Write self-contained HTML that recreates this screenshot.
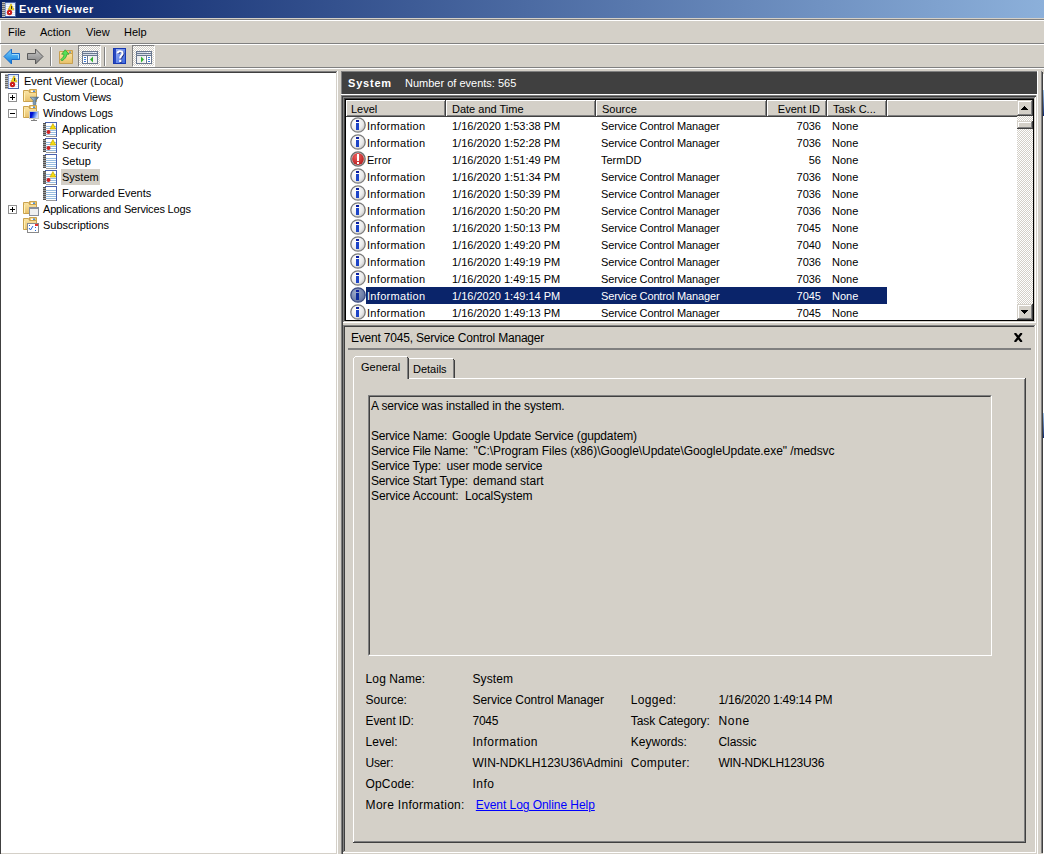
<!DOCTYPE html>
<html><head><meta charset="utf-8">
<style>
*{margin:0;padding:0;box-sizing:border-box}
html,body{width:1044px;height:854px;overflow:hidden;background:#d4d0c8}
body{position:relative;font-family:"Liberation Sans",sans-serif;font-size:11px;color:#000}
.a{position:absolute}
.t{position:absolute;white-space:pre;line-height:13px;height:13px}
svg{overflow:visible}
</style></head><body>
<svg width="0" height="0" style="position:absolute"><defs>
<radialGradient id="gi" cx="0.35" cy="0.35" r="0.8"><stop offset="0" stop-color="#ffffff"/><stop offset="0.6" stop-color="#eaeaea"/><stop offset="1" stop-color="#b8b8b8"/></radialGradient>
<radialGradient id="gis" cx="0.35" cy="0.35" r="0.8"><stop offset="0" stop-color="#9aa8c8"/><stop offset="1" stop-color="#5a6a98"/></radialGradient>
<radialGradient id="ge" cx="0.4" cy="0.3" r="0.8"><stop offset="0" stop-color="#f06060"/><stop offset="1" stop-color="#b01818"/></radialGradient>
<linearGradient id="gf" x1="0" y1="0" x2="0" y2="1"><stop offset="0" stop-color="#fbe6a8"/><stop offset="1" stop-color="#e8c068"/></linearGradient>
<linearGradient id="gb" x1="0" y1="0" x2="0" y2="1"><stop offset="0" stop-color="#7ad0ff"/><stop offset="1" stop-color="#0a78d8"/></linearGradient>
<linearGradient id="gg" x1="0" y1="0" x2="0" y2="1"><stop offset="0" stop-color="#c8c8c8"/><stop offset="1" stop-color="#808080"/></linearGradient>
<pattern id="dith" width="2" height="2" patternUnits="userSpaceOnUse"><rect width="2" height="2" fill="#d4d0c8"/><rect width="1" height="1" fill="#fff"/><rect x="1" y="1" width="1" height="1" fill="#fff"/></pattern>
</defs></svg>
<div class="a" style="left:0px;top:0px;width:1044px;height:18px;background:linear-gradient(to right,#0a246a,#8cb0da);"></div>
<svg class="a" style="left:2px;top:2px" width="14" height="15" viewBox="0 0 14 15" shape-rendering="crispEdges"><rect x="2" y="0" width="12" height="15" fill="#4a64a8"/><rect x="3" y="1" width="10" height="13" fill="#8aa4d8"/><rect x="4" y="1" width="9" height="13" fill="#dce8f8"/><rect x="4" y="3" width="9" height="1" fill="#fff"/><rect x="4" y="5" width="9" height="1" fill="#fff"/><rect x="4" y="7" width="9" height="1" fill="#fff"/><rect x="4" y="9" width="9" height="1" fill="#fff"/><rect x="4" y="11" width="9" height="1" fill="#fff"/><rect x="4" y="13" width="9" height="1" fill="#fff"/><rect x="0" y="0" width="3" height="15" fill="#b8b8b8"/><rect x="0" y="1" width="3" height="1" fill="#686868"/><rect x="0" y="3" width="3" height="1" fill="#686868"/><rect x="0" y="5" width="3" height="1" fill="#686868"/><rect x="0" y="7" width="3" height="1" fill="#686868"/><rect x="0" y="9" width="3" height="1" fill="#686868"/><rect x="0" y="11" width="3" height="1" fill="#686868"/><rect x="0" y="13" width="3" height="1" fill="#686868"/><path d="M6 7.8 L12 7.8 L9 1.8 Z" fill="#f4d818" stroke="#c8a000" stroke-width="0.6" shape-rendering="geometricPrecision"/><rect x="8.5" y="3.8" width="1" height="2" fill="#333"/><rect x="8.5" y="6.3" width="1" height="1" fill="#333"/><circle cx="7.5" cy="10.5" r="2.7" fill="#cc2020" shape-rendering="geometricPrecision"/><rect x="7" y="10" width="1" height="1" fill="#fff"/></svg>
<div class="t" style="left:19px;top:3px;color:#fff;font-weight:bold;letter-spacing:0.55px">Event Viewer</div>
<div class="a" style="left:0px;top:18px;width:1044px;height:1px;background:#d4d0c8"></div>
<div class="a" style="left:0px;top:19px;width:1044px;height:1px;background:#808080"></div>
<div class="a" style="left:0px;top:20px;width:1044px;height:1px;background:#fff"></div>
<div class="a" style="left:0px;top:21px;width:1px;height:22px;background:#fff"></div>
<div class="a" style="left:0px;top:43px;width:1044px;height:1px;background:#808080"></div>
<div class="a" style="left:0px;top:44px;width:1044px;height:1px;background:#fff"></div>
<div class="a" style="left:0px;top:45px;width:1px;height:22px;background:#fff"></div>
<div class="a" style="left:0px;top:67px;width:1044px;height:1px;background:#808080"></div>
<div class="a" style="left:0px;top:68px;width:1044px;height:1px;background:#fff"></div>
<div class="t" style="left:8px;top:26px;">File</div>
<div class="t" style="left:40px;top:26px;">Action</div>
<div class="t" style="left:86px;top:26px;">View</div>
<div class="t" style="left:124px;top:26px;">Help</div>
<svg class="a" style="left:3px;top:48px" width="18" height="17" viewBox="0 0 18 17"><path d="M1 8.5 L8.5 1 L8.5 5.5 L16.5 5.5 L16.5 11.5 L8.5 11.5 L8.5 16 Z" fill="url(#gb)" stroke="#1a6cc8" stroke-width="1"/><path d="M9 6.5 L15.5 6.5 L15.5 10.5" fill="none" stroke="#b8e8ff" stroke-width="0.8"/></svg>
<svg class="a" style="left:26px;top:48px" width="18" height="17" viewBox="0 0 18 17"><path d="M17 8.5 L9.5 1 L9.5 5.5 L1.5 5.5 L1.5 11.5 L9.5 11.5 L9.5 16 Z" fill="url(#gg)" stroke="#5a5a5a" stroke-width="1"/></svg>
<div class="a" style="left:50px;top:47px;width:1px;height:19px;background:#808080"></div>
<div class="a" style="left:51px;top:47px;width:1px;height:19px;background:#fff"></div>
<svg class="a" style="left:59px;top:50px" width="15" height="15" viewBox="0 0 15 15"><path d="M7.5 0.5 L13.5 0.5 L13.5 4.5 L7.5 4.5 Z" fill="#f2c868" stroke="#c8a050"/><rect x="10" y="1.5" width="2" height="1.2" fill="#4a90e0"/><path d="M0.5 1.5 L6.5 1.5 L7.5 3.5 L13.5 3.5 L13.5 13.5 L0.5 13.5 Z" fill="url(#gf)" stroke="#c8a050"/><path d="M6.2 -0.2 L10 4.2 L7.9 4.2 C7.6 7 5.8 9.2 3 10.8 L1.6 9.6 C4 8 4.9 6.2 4.9 4.2 L2.6 4.2 Z" fill="#56e056" stroke="#2a9a2a" stroke-width="0.7"/></svg>
<div class="a" style="left:78px;top:45px;width:23px;height:22px;border-top:1px solid #808080;border-left:1px solid #808080;border-right:1px solid #fff;border-bottom:1px solid #fff;background-image:repeating-conic-gradient(#fff 0 25%,#d4d0c8 0 50%);background-size:2px 2px"></div>
<svg class="a" style="left:82px;top:51px" width="16" height="13" viewBox="0 0 16 13" shape-rendering="crispEdges"><rect x="0" y="0" width="16" height="13" fill="#6a7890"/><rect x="1" y="1" width="14" height="1" fill="#d8dee8"/><rect x="1" y="3" width="14" height="1" fill="#d8dee8"/><rect x="11" y="1" width="1" height="1" fill="#fff"/><rect x="13" y="1" width="1" height="1" fill="#fff"/><rect x="1" y="5" width="14" height="7" fill="#fff"/><rect x="5" y="5" width="1" height="7" fill="#6a7890"/><rect x="2" y="6" width="2" height="1" fill="#3a7ad8"/><rect x="2" y="8" width="2" height="1" fill="#3a7ad8"/><rect x="2" y="10" width="2" height="1" fill="#3a7ad8"/><rect x="7" y="5" width="8" height="7" fill="#f0f0f0"/><path d="M8 8.5 L11 5.5 L11 11.5 Z" fill="#30b030" shape-rendering="geometricPrecision"/></svg>
<div class="a" style="left:104px;top:47px;width:1px;height:19px;background:#808080"></div>
<div class="a" style="left:105px;top:47px;width:1px;height:19px;background:#fff"></div>
<svg class="a" style="left:113px;top:48px" width="13" height="16" viewBox="0 0 13 16"><defs><linearGradient id="gh" x1="0" y1="0" x2="1" y2="1"><stop offset="0" stop-color="#9ab0f4"/><stop offset="1" stop-color="#3a68e0"/></linearGradient></defs><rect x="0" y="0" width="13" height="16" fill="#1838b0"/><rect x="3" y="1" width="9" height="14" fill="url(#gh)"/><rect x="1" y="1" width="2" height="14" fill="#2848c0"/><path d="M5.3999999999999995 6.0 C5.3999999999999995 3.2 10.4 3.0 10.4 5.8 C10.4 7.8 8.1 8.2 8.1 10.4 V11.2" fill="none" stroke="#1a2a80" stroke-width="2.1"/><rect x="7.0" y="12.4" width="2.2" height="2.2" fill="#1a2a80"/><path d="M4.6 5.4 C4.6 2.6 9.6 2.4 9.6 5.2 C9.6 7.2 7.3 7.6 7.3 9.8 V10.6" fill="none" stroke="#fff" stroke-width="2.1"/><rect x="6.2" y="11.8" width="2.2" height="2.2" fill="#fff"/></svg>
<div class="a" style="left:132px;top:45px;width:23px;height:22px;border-top:1px solid #808080;border-left:1px solid #808080;border-right:1px solid #fff;border-bottom:1px solid #fff;background-image:repeating-conic-gradient(#fff 0 25%,#d4d0c8 0 50%);background-size:2px 2px"></div>
<svg class="a" style="left:136px;top:51px" width="16" height="13" viewBox="0 0 16 13" shape-rendering="crispEdges"><rect x="0" y="0" width="16" height="13" fill="#6a7890"/><rect x="1" y="1" width="14" height="1" fill="#d8dee8"/><rect x="1" y="3" width="14" height="1" fill="#d8dee8"/><rect x="11" y="1" width="1" height="1" fill="#fff"/><rect x="13" y="1" width="1" height="1" fill="#fff"/><rect x="1" y="5" width="14" height="7" fill="#fff"/><rect x="10" y="5" width="1" height="7" fill="#6a7890"/><rect x="12" y="6" width="2" height="1" fill="#3a7ad8"/><rect x="12" y="8" width="2" height="1" fill="#3a7ad8"/><rect x="12" y="10" width="2" height="1" fill="#3a7ad8"/><rect x="1" y="5" width="8" height="7" fill="#f0f0f0"/><path d="M8 8.5 L5 5.5 L5 11.5 Z" fill="#30b030" shape-rendering="geometricPrecision"/></svg>
<div class="a" style="left:0px;top:71px;width:338px;height:783px;background:#fff;"></div>
<div class="a" style="left:0px;top:71px;width:338px;height:1px;background:#808080"></div>
<div class="a" style="left:0px;top:72px;width:337px;height:1px;background:#404040"></div>
<div class="a" style="left:0px;top:72px;width:1px;height:782px;background:#404040"></div>
<div class="a" style="left:336px;top:72px;width:1px;height:782px;background:#d4d0c8"></div>
<div class="a" style="left:337px;top:71px;width:1px;height:783px;background:#fff"></div>
<div class="a" style="left:1px;top:853px;width:336px;height:1px;background:#d4d0c8"></div>
<svg class="a" style="left:5px;top:74px" width="14" height="15" viewBox="0 0 14 15" shape-rendering="crispEdges"><rect x="2" y="0" width="12" height="15" fill="#4a64a8"/><rect x="3" y="1" width="10" height="13" fill="#8aa4d8"/><rect x="4" y="1" width="9" height="13" fill="#dce8f8"/><rect x="4" y="3" width="9" height="1" fill="#fff"/><rect x="4" y="5" width="9" height="1" fill="#fff"/><rect x="4" y="7" width="9" height="1" fill="#fff"/><rect x="4" y="9" width="9" height="1" fill="#fff"/><rect x="4" y="11" width="9" height="1" fill="#fff"/><rect x="4" y="13" width="9" height="1" fill="#fff"/><rect x="0" y="0" width="3" height="15" fill="#b8b8b8"/><rect x="0" y="1" width="3" height="1" fill="#686868"/><rect x="0" y="3" width="3" height="1" fill="#686868"/><rect x="0" y="5" width="3" height="1" fill="#686868"/><rect x="0" y="7" width="3" height="1" fill="#686868"/><rect x="0" y="9" width="3" height="1" fill="#686868"/><rect x="0" y="11" width="3" height="1" fill="#686868"/><rect x="0" y="13" width="3" height="1" fill="#686868"/><path d="M6 7.8 L12 7.8 L9 1.8 Z" fill="#f4d818" stroke="#c8a000" stroke-width="0.6" shape-rendering="geometricPrecision"/><rect x="8.5" y="3.8" width="1" height="2" fill="#333"/><rect x="8.5" y="6.3" width="1" height="1" fill="#333"/><circle cx="7.5" cy="10.5" r="2.7" fill="#cc2020" shape-rendering="geometricPrecision"/><rect x="7" y="10" width="1" height="1" fill="#fff"/></svg>
<div class="t" style="left:24px;top:75px;letter-spacing:-0.1px">Event Viewer (Local)</div>
<svg class="a" style="left:8px;top:93px" width="9" height="9" viewBox="0 0 9 9" shape-rendering="crispEdges"><rect x="0.5" y="0.5" width="8" height="8" fill="#fff" stroke="#919191"/><rect x="2" y="4" width="5" height="1" fill="#000"/><rect x="4" y="2" width="1" height="5" fill="#000"/></svg>
<svg class="a" style="left:23px;top:89px" width="16" height="16" viewBox="0 0 16 16"><path d="M6.5 0.5 L13.5 0.5 L13.5 4.5 L6.5 4.5 Z" fill="#f2c868" stroke="#caa24e"/><rect x="8" y="1.5" width="2" height="1.5" fill="#fff"/><rect x="10" y="1.5" width="2" height="1.5" fill="#4a90e0"/><path d="M0.5 1.5 L5.5 1.5 L6.5 3.5 L13.5 3.5 L13.5 12.5 L0.5 12.5 Z" fill="url(#gf)" stroke="#caa24e"/><rect x="1" y="4" width="1" height="8" fill="#fff2b8"/><defs><linearGradient id="gfu" x1="0" y1="0" x2="1" y2="0"><stop offset="0" stop-color="#c8e0f0"/><stop offset="1" stop-color="#3a5a78"/></linearGradient></defs><path d="M7.2 8.2 H15.6 L12.8 11.5 V15.6 H10.2 V11.5 Z" fill="url(#gfu)" stroke="#4a6a88" stroke-width="0.7"/></svg>
<div class="t" style="left:43px;top:91px;letter-spacing:-0.17px">Custom Views</div>
<svg class="a" style="left:8px;top:109px" width="9" height="9" viewBox="0 0 9 9" shape-rendering="crispEdges"><rect x="0.5" y="0.5" width="8" height="8" fill="#fff" stroke="#919191"/><rect x="2" y="4" width="5" height="1" fill="#000"/></svg>
<svg class="a" style="left:23px;top:105px" width="16" height="16" viewBox="0 0 16 16"><path d="M6.5 0.5 L13.5 0.5 L13.5 4.5 L6.5 4.5 Z" fill="#f2c868" stroke="#caa24e"/><rect x="8" y="1.5" width="2" height="1.5" fill="#fff"/><rect x="10" y="1.5" width="2" height="1.5" fill="#4a90e0"/><path d="M0.5 1.5 L5.5 1.5 L6.5 3.5 L13.5 3.5 L13.5 12.5 L0.5 12.5 Z" fill="url(#gf)" stroke="#caa24e"/><rect x="1" y="4" width="1" height="8" fill="#fff2b8"/><defs><linearGradient id="gm" x1="0" y1="0" x2="1" y2="0.3"><stop offset="0.35" stop-color="#0010d0"/><stop offset="0.6" stop-color="#3a6ae8"/><stop offset="1" stop-color="#c8d8ff"/></linearGradient></defs><rect x="6" y="6" width="10" height="8" fill="#c8c8c0"/><rect x="7" y="7" width="8" height="6" fill="url(#gm)"/><rect x="8" y="15" width="6" height="1" fill="#808080"/><rect x="10" y="14" width="2" height="1" fill="#b0b0b0"/></svg>
<div class="t" style="left:43px;top:107px;letter-spacing:-0.15px">Windows Logs</div>
<svg class="a" style="left:43px;top:122px" width="14" height="15" viewBox="0 0 14 15" shape-rendering="crispEdges"><rect x="2" y="0" width="12" height="1" fill="#4a64b0"/><rect x="13" y="0" width="1" height="15" fill="#4a64b0"/><rect x="3" y="14" width="10" height="1" fill="#9a9a9a"/><rect x="3" y="1" width="10" height="13" fill="#fff"/><rect x="3" y="4" width="10" height="1" fill="#98bde0"/><rect x="3" y="6" width="10" height="1" fill="#98bde0"/><rect x="3" y="8" width="10" height="1" fill="#98bde0"/><rect x="3" y="10" width="10" height="1" fill="#98bde0"/><rect x="3" y="12" width="10" height="1" fill="#98bde0"/><rect x="0" y="1" width="3" height="13" fill="#9a9a9a"/><rect x="0" y="1" width="3" height="1" fill="#505050"/><rect x="0" y="3" width="3" height="1" fill="#505050"/><rect x="0" y="5" width="3" height="1" fill="#505050"/><rect x="0" y="7" width="3" height="1" fill="#505050"/><rect x="0" y="9" width="3" height="1" fill="#505050"/><rect x="0" y="11" width="3" height="1" fill="#505050"/><rect x="0" y="13" width="3" height="1" fill="#505050"/><path d="M7 7 L12.8 7 L9.9 1.6 Z" fill="#f4dc10" stroke="#c8a800" stroke-width="0.7" shape-rendering="geometricPrecision"/><circle cx="5.5" cy="10" r="2" fill="#d02020" shape-rendering="geometricPrecision"/></svg>
<div class="t" style="left:62px;top:123px;">Application</div>
<svg class="a" style="left:43px;top:138px" width="14" height="15" viewBox="0 0 14 15" shape-rendering="crispEdges"><rect x="2" y="0" width="12" height="1" fill="#4a64b0"/><rect x="13" y="0" width="1" height="15" fill="#4a64b0"/><rect x="3" y="14" width="10" height="1" fill="#9a9a9a"/><rect x="3" y="1" width="10" height="13" fill="#fff"/><rect x="3" y="4" width="10" height="1" fill="#98bde0"/><rect x="3" y="6" width="10" height="1" fill="#98bde0"/><rect x="3" y="8" width="10" height="1" fill="#98bde0"/><rect x="3" y="10" width="10" height="1" fill="#98bde0"/><rect x="3" y="12" width="10" height="1" fill="#98bde0"/><rect x="0" y="1" width="3" height="13" fill="#9a9a9a"/><rect x="0" y="1" width="3" height="1" fill="#505050"/><rect x="0" y="3" width="3" height="1" fill="#505050"/><rect x="0" y="5" width="3" height="1" fill="#505050"/><rect x="0" y="7" width="3" height="1" fill="#505050"/><rect x="0" y="9" width="3" height="1" fill="#505050"/><rect x="0" y="11" width="3" height="1" fill="#505050"/><rect x="0" y="13" width="3" height="1" fill="#505050"/><path d="M7 7 L12.8 7 L9.9 1.6 Z" fill="#f4dc10" stroke="#c8a800" stroke-width="0.7" shape-rendering="geometricPrecision"/><circle cx="5.5" cy="10" r="2" fill="#d02020" shape-rendering="geometricPrecision"/></svg>
<div class="t" style="left:62px;top:139px;">Security</div>
<svg class="a" style="left:43px;top:154px" width="14" height="15" viewBox="0 0 14 15" shape-rendering="crispEdges"><rect x="2" y="0" width="12" height="1" fill="#4a64b0"/><rect x="13" y="0" width="1" height="15" fill="#4a64b0"/><rect x="3" y="14" width="10" height="1" fill="#9a9a9a"/><rect x="3" y="1" width="10" height="13" fill="#fff"/><rect x="3" y="4" width="10" height="1" fill="#98bde0"/><rect x="3" y="6" width="10" height="1" fill="#98bde0"/><rect x="3" y="8" width="10" height="1" fill="#98bde0"/><rect x="3" y="10" width="10" height="1" fill="#98bde0"/><rect x="3" y="12" width="10" height="1" fill="#98bde0"/><rect x="0" y="1" width="3" height="13" fill="#9a9a9a"/><rect x="0" y="1" width="3" height="1" fill="#505050"/><rect x="0" y="3" width="3" height="1" fill="#505050"/><rect x="0" y="5" width="3" height="1" fill="#505050"/><rect x="0" y="7" width="3" height="1" fill="#505050"/><rect x="0" y="9" width="3" height="1" fill="#505050"/><rect x="0" y="11" width="3" height="1" fill="#505050"/><rect x="0" y="13" width="3" height="1" fill="#505050"/></svg>
<div class="t" style="left:62px;top:155px;">Setup</div>
<svg class="a" style="left:43px;top:170px" width="14" height="15" viewBox="0 0 14 15" shape-rendering="crispEdges"><rect x="2" y="0" width="12" height="1" fill="#4a64b0"/><rect x="13" y="0" width="1" height="15" fill="#4a64b0"/><rect x="3" y="14" width="10" height="1" fill="#9a9a9a"/><rect x="3" y="1" width="10" height="13" fill="#fff"/><rect x="3" y="4" width="10" height="1" fill="#98bde0"/><rect x="3" y="6" width="10" height="1" fill="#98bde0"/><rect x="3" y="8" width="10" height="1" fill="#98bde0"/><rect x="3" y="10" width="10" height="1" fill="#98bde0"/><rect x="3" y="12" width="10" height="1" fill="#98bde0"/><rect x="0" y="1" width="3" height="13" fill="#9a9a9a"/><rect x="0" y="1" width="3" height="1" fill="#505050"/><rect x="0" y="3" width="3" height="1" fill="#505050"/><rect x="0" y="5" width="3" height="1" fill="#505050"/><rect x="0" y="7" width="3" height="1" fill="#505050"/><rect x="0" y="9" width="3" height="1" fill="#505050"/><rect x="0" y="11" width="3" height="1" fill="#505050"/><rect x="0" y="13" width="3" height="1" fill="#505050"/><rect x="0" y="1" width="3" height="13" fill="#606060" opacity="0.5"/><path d="M7 7 L12.8 7 L9.9 1.6 Z" fill="#f4dc10" stroke="#c8a800" stroke-width="0.7" shape-rendering="geometricPrecision"/><circle cx="5.5" cy="10" r="2" fill="#d02020" shape-rendering="geometricPrecision"/></svg>
<div class="a" style="left:61px;top:169px;width:39px;height:16px;background:#d4d0c8;"></div>
<div class="t" style="left:62px;top:171px;">System</div>
<svg class="a" style="left:43px;top:186px" width="14" height="15" viewBox="0 0 14 15" shape-rendering="crispEdges"><rect x="2" y="0" width="12" height="1" fill="#4a64b0"/><rect x="13" y="0" width="1" height="15" fill="#4a64b0"/><rect x="3" y="14" width="10" height="1" fill="#9a9a9a"/><rect x="3" y="1" width="10" height="13" fill="#fff"/><rect x="3" y="4" width="10" height="1" fill="#98bde0"/><rect x="3" y="6" width="10" height="1" fill="#98bde0"/><rect x="3" y="8" width="10" height="1" fill="#98bde0"/><rect x="3" y="10" width="10" height="1" fill="#98bde0"/><rect x="3" y="12" width="10" height="1" fill="#98bde0"/><rect x="0" y="1" width="3" height="13" fill="#9a9a9a"/><rect x="0" y="1" width="3" height="1" fill="#505050"/><rect x="0" y="3" width="3" height="1" fill="#505050"/><rect x="0" y="5" width="3" height="1" fill="#505050"/><rect x="0" y="7" width="3" height="1" fill="#505050"/><rect x="0" y="9" width="3" height="1" fill="#505050"/><rect x="0" y="11" width="3" height="1" fill="#505050"/><rect x="0" y="13" width="3" height="1" fill="#505050"/></svg>
<div class="t" style="left:62px;top:187px;">Forwarded Events</div>
<svg class="a" style="left:8px;top:205px" width="9" height="9" viewBox="0 0 9 9" shape-rendering="crispEdges"><rect x="0.5" y="0.5" width="8" height="8" fill="#fff" stroke="#919191"/><rect x="2" y="4" width="5" height="1" fill="#000"/><rect x="4" y="2" width="1" height="5" fill="#000"/></svg>
<svg class="a" style="left:23px;top:201px" width="16" height="16" viewBox="0 0 16 16"><path d="M6.5 0.5 L13.5 0.5 L13.5 4.5 L6.5 4.5 Z" fill="#f2c868" stroke="#caa24e"/><rect x="8" y="1.5" width="2" height="1.5" fill="#fff"/><rect x="10" y="1.5" width="2" height="1.5" fill="#4a90e0"/><path d="M0.5 1.5 L5.5 1.5 L6.5 3.5 L13.5 3.5 L13.5 12.5 L0.5 12.5 Z" fill="url(#gf)" stroke="#caa24e"/><rect x="1" y="4" width="1" height="8" fill="#fff2b8"/><rect x="6.5" y="6.5" width="9" height="8" fill="#f0f0f0" stroke="#8a8f9a"/><rect x="7" y="7" width="8" height="1" fill="#8a8f9a"/></svg>
<div class="t" style="left:43px;top:203px;letter-spacing:-0.17px">Applications and Services Logs</div>
<svg class="a" style="left:23px;top:217px" width="16" height="16" viewBox="0 0 16 16"><path d="M6.5 0.5 L13.5 0.5 L13.5 4.5 L6.5 4.5 Z" fill="#f2c868" stroke="#caa24e"/><rect x="8" y="1.5" width="2" height="1.5" fill="#fff"/><rect x="10" y="1.5" width="2" height="1.5" fill="#4a90e0"/><path d="M0.5 1.5 L5.5 1.5 L6.5 3.5 L13.5 3.5 L13.5 12.5 L0.5 12.5 Z" fill="url(#gf)" stroke="#caa24e"/><rect x="1" y="4" width="1" height="8" fill="#fff2b8"/><rect x="4.5" y="6.5" width="11" height="9" fill="#fff" stroke="#8a8a8a"/><rect x="12" y="7" width="3" height="2" fill="#e83030"/><path d="M6 11 L7.5 13 L10 9" fill="none" stroke="#2a6ad8" stroke-width="1"/><rect x="6" y="8" width="1" height="1" fill="#2a6ad8"/><rect x="12" y="10" width="1" height="1" fill="#2a6ad8"/><rect x="12" y="13" width="1" height="1" fill="#2a6ad8"/></svg>
<div class="t" style="left:43px;top:219px;">Subscriptions</div>
<div class="a" style="left:342px;top:72px;width:695px;height:22px;background:#404040;"></div>
<div class="a" style="left:341px;top:71px;width:696px;height:1px;background:#808080"></div>
<div class="a" style="left:341px;top:71px;width:1px;height:24px;background:#808080"></div>
<div class="t" style="left:348px;top:77px;color:#fff;font-weight:bold;letter-spacing:0.8px">System</div>
<div class="t" style="left:405px;top:77px;color:#fff">Number of events: 565</div>
<div class="a" style="left:341px;top:94px;width:696px;height:1px;background:#fff"></div>
<div class="a" style="left:341px;top:95px;width:696px;height:1px;background:#808080"></div>
<div class="a" style="left:342px;top:96px;width:695px;height:1px;background:#404040"></div>
<div class="a" style="left:341px;top:95px;width:1px;height:759px;background:#808080"></div>
<div class="a" style="left:342px;top:96px;width:1px;height:758px;background:#404040"></div>
<div class="a" style="left:1036px;top:95px;width:1px;height:759px;background:#d4d0c8"></div>
<div class="a" style="left:1037px;top:71px;width:1px;height:783px;background:#fff"></div>
<div class="a" style="left:1041px;top:71px;width:1px;height:782px;background:#808080"></div>
<div class="a" style="left:1042px;top:72px;width:1px;height:781px;background:#404040"></div>
<div class="a" style="left:1043px;top:74px;width:1px;height:780px;background:#fff"></div>
<div class="a" style="left:1043px;top:90px;width:1px;height:26px;background:linear-gradient(#a6caf0,#0a246a);"></div>
<div class="a" style="left:1043px;top:413px;width:1px;height:25px;background:linear-gradient(#a6caf0,#0a246a);"></div>
<div class="a" style="left:343px;top:97px;width:693px;height:1px;background:#808080"></div>
<div class="a" style="left:343px;top:97px;width:1px;height:226px;background:#808080"></div>
<div class="a" style="left:344px;top:98px;width:691px;height:1px;background:#404040"></div>
<div class="a" style="left:344px;top:98px;width:1px;height:224px;background:#404040"></div>
<div class="a" style="left:1034px;top:98px;width:1px;height:224px;background:#d4d0c8"></div>
<div class="a" style="left:344px;top:321px;width:691px;height:1px;background:#d4d0c8"></div>
<div class="a" style="left:1035px;top:97px;width:1px;height:226px;background:#fff"></div>
<div class="a" style="left:343px;top:322px;width:693px;height:1px;background:#fff"></div>
<div class="a" style="left:345px;top:99px;width:689px;height:222px;border:1px solid #000;background:#fff;overflow:hidden">
<div class="a" style="left:0px;top:0;width:100px;height:17px;background:#d4d0c8;box-shadow:inset -1px -1px #404040,inset 1px 1px #fff,inset -2px -2px #808080"></div>
<div class="t" style="left:5px;top:3px">Level</div>
<div class="a" style="left:100px;top:0;width:150px;height:17px;background:#d4d0c8;box-shadow:inset -1px -1px #404040,inset 1px 1px #fff,inset -2px -2px #808080"></div>
<div class="t" style="left:106px;top:3px">Date and Time</div>
<div class="a" style="left:250px;top:0;width:171px;height:17px;background:#d4d0c8;box-shadow:inset -1px -1px #404040,inset 1px 1px #fff,inset -2px -2px #808080"></div>
<div class="t" style="left:256px;top:3px">Source</div>
<div class="a" style="left:421px;top:0;width:60px;height:17px;background:#d4d0c8;box-shadow:inset -1px -1px #404040,inset 1px 1px #fff,inset -2px -2px #808080"></div>
<div class="t" style="left:421px;top:2px;width:53px;text-align:right;top:3px">Event ID</div>
<div class="a" style="left:481px;top:0;width:60px;height:17px;background:#d4d0c8;box-shadow:inset -1px -1px #404040,inset 1px 1px #fff,inset -2px -2px #808080"></div>
<div class="t" style="left:487px;top:3px">Task C...</div>
<div class="a" style="left:541px;top:0;width:130px;height:17px;background:#d4d0c8;box-shadow:inset 0 -1px #404040,inset 1px 1px #fff,inset 0 -2px #808080"></div>
</div>
<div class="a" style="left:346px;top:117px;width:672px;height:203px;overflow:hidden">
<div class="t" style="left:21px;top:3px;color:#000;letter-spacing:0.3px">Information</div>
<div class="t" style="left:106px;top:3px;color:#000">1/16/2020 1:53:38 PM</div>
<div class="t" style="left:255px;top:3px;color:#000;letter-spacing:-0.14px">Service Control Manager</div>
<div class="t" style="left:0;width:475px;text-align:right;top:3px;color:#000">7036</div>
<div class="t" style="left:486px;top:3px;color:#000">None</div>
<div class="t" style="left:21px;top:20px;color:#000;letter-spacing:0.3px">Information</div>
<div class="t" style="left:106px;top:20px;color:#000">1/16/2020 1:52:28 PM</div>
<div class="t" style="left:255px;top:20px;color:#000;letter-spacing:-0.14px">Service Control Manager</div>
<div class="t" style="left:0;width:475px;text-align:right;top:20px;color:#000">7036</div>
<div class="t" style="left:486px;top:20px;color:#000">None</div>
<div class="t" style="left:21px;top:37px;color:#000;letter-spacing:0">Error</div>
<div class="t" style="left:106px;top:37px;color:#000">1/16/2020 1:51:49 PM</div>
<div class="t" style="left:255px;top:37px;color:#000;letter-spacing:0">TermDD</div>
<div class="t" style="left:0;width:475px;text-align:right;top:37px;color:#000">56</div>
<div class="t" style="left:486px;top:37px;color:#000">None</div>
<div class="t" style="left:21px;top:54px;color:#000;letter-spacing:0.3px">Information</div>
<div class="t" style="left:106px;top:54px;color:#000">1/16/2020 1:51:34 PM</div>
<div class="t" style="left:255px;top:54px;color:#000;letter-spacing:-0.14px">Service Control Manager</div>
<div class="t" style="left:0;width:475px;text-align:right;top:54px;color:#000">7036</div>
<div class="t" style="left:486px;top:54px;color:#000">None</div>
<div class="t" style="left:21px;top:71px;color:#000;letter-spacing:0.3px">Information</div>
<div class="t" style="left:106px;top:71px;color:#000">1/16/2020 1:50:39 PM</div>
<div class="t" style="left:255px;top:71px;color:#000;letter-spacing:-0.14px">Service Control Manager</div>
<div class="t" style="left:0;width:475px;text-align:right;top:71px;color:#000">7036</div>
<div class="t" style="left:486px;top:71px;color:#000">None</div>
<div class="t" style="left:21px;top:88px;color:#000;letter-spacing:0.3px">Information</div>
<div class="t" style="left:106px;top:88px;color:#000">1/16/2020 1:50:20 PM</div>
<div class="t" style="left:255px;top:88px;color:#000;letter-spacing:-0.14px">Service Control Manager</div>
<div class="t" style="left:0;width:475px;text-align:right;top:88px;color:#000">7036</div>
<div class="t" style="left:486px;top:88px;color:#000">None</div>
<div class="t" style="left:21px;top:105px;color:#000;letter-spacing:0.3px">Information</div>
<div class="t" style="left:106px;top:105px;color:#000">1/16/2020 1:50:13 PM</div>
<div class="t" style="left:255px;top:105px;color:#000;letter-spacing:-0.14px">Service Control Manager</div>
<div class="t" style="left:0;width:475px;text-align:right;top:105px;color:#000">7045</div>
<div class="t" style="left:486px;top:105px;color:#000">None</div>
<div class="t" style="left:21px;top:122px;color:#000;letter-spacing:0.3px">Information</div>
<div class="t" style="left:106px;top:122px;color:#000">1/16/2020 1:49:20 PM</div>
<div class="t" style="left:255px;top:122px;color:#000;letter-spacing:-0.14px">Service Control Manager</div>
<div class="t" style="left:0;width:475px;text-align:right;top:122px;color:#000">7040</div>
<div class="t" style="left:486px;top:122px;color:#000">None</div>
<div class="t" style="left:21px;top:139px;color:#000;letter-spacing:0.3px">Information</div>
<div class="t" style="left:106px;top:139px;color:#000">1/16/2020 1:49:19 PM</div>
<div class="t" style="left:255px;top:139px;color:#000;letter-spacing:-0.14px">Service Control Manager</div>
<div class="t" style="left:0;width:475px;text-align:right;top:139px;color:#000">7036</div>
<div class="t" style="left:486px;top:139px;color:#000">None</div>
<div class="t" style="left:21px;top:156px;color:#000;letter-spacing:0.3px">Information</div>
<div class="t" style="left:106px;top:156px;color:#000">1/16/2020 1:49:15 PM</div>
<div class="t" style="left:255px;top:156px;color:#000;letter-spacing:-0.14px">Service Control Manager</div>
<div class="t" style="left:0;width:475px;text-align:right;top:156px;color:#000">7036</div>
<div class="t" style="left:486px;top:156px;color:#000">None</div>
<div class="a" style="left:20px;top:170px;width:521px;height:17px;background:#0a246a"></div>
<div class="t" style="left:21px;top:173px;color:#fff;letter-spacing:0.3px">Information</div>
<div class="t" style="left:106px;top:173px;color:#fff">1/16/2020 1:49:14 PM</div>
<div class="t" style="left:255px;top:173px;color:#fff;letter-spacing:-0.14px">Service Control Manager</div>
<div class="t" style="left:0;width:475px;text-align:right;top:173px;color:#fff">7045</div>
<div class="t" style="left:486px;top:173px;color:#fff">None</div>
<div class="t" style="left:21px;top:190px;color:#000;letter-spacing:0.3px">Information</div>
<div class="t" style="left:106px;top:190px;color:#000">1/16/2020 1:49:13 PM</div>
<div class="t" style="left:255px;top:190px;color:#000;letter-spacing:-0.14px">Service Control Manager</div>
<div class="t" style="left:0;width:475px;text-align:right;top:190px;color:#000">7045</div>
<div class="t" style="left:486px;top:190px;color:#000">None</div>
</div>
<svg class="a" style="left:350px;top:117px" width="16" height="16" viewBox="0 0 16 16"><circle cx="8" cy="8" r="7.2" fill="url(#gi)" stroke="#7c7c7c" stroke-width="1.3"/><rect x="6" y="3" width="3" height="2" fill="#0a1ea0"/><rect x="6" y="6" width="3" height="7" fill="#1c44c8"/></svg>
<svg class="a" style="left:350px;top:134px" width="16" height="16" viewBox="0 0 16 16"><circle cx="8" cy="8" r="7.2" fill="url(#gi)" stroke="#7c7c7c" stroke-width="1.3"/><rect x="6" y="3" width="3" height="2" fill="#0a1ea0"/><rect x="6" y="6" width="3" height="7" fill="#1c44c8"/></svg>
<svg class="a" style="left:350px;top:151px" width="16" height="16" viewBox="0 0 16 16"><circle cx="8" cy="8" r="7.1" fill="#c8d0d0" stroke="#6e6e6e" stroke-width="1.4"/><circle cx="8" cy="8" r="5.9" fill="url(#ge)"/><rect x="7" y="3" width="2" height="7" fill="#fff"/><rect x="7" y="11" width="2" height="2" fill="#fff"/></svg>
<svg class="a" style="left:350px;top:168px" width="16" height="16" viewBox="0 0 16 16"><circle cx="8" cy="8" r="7.2" fill="url(#gi)" stroke="#7c7c7c" stroke-width="1.3"/><rect x="6" y="3" width="3" height="2" fill="#0a1ea0"/><rect x="6" y="6" width="3" height="7" fill="#1c44c8"/></svg>
<svg class="a" style="left:350px;top:185px" width="16" height="16" viewBox="0 0 16 16"><circle cx="8" cy="8" r="7.2" fill="url(#gi)" stroke="#7c7c7c" stroke-width="1.3"/><rect x="6" y="3" width="3" height="2" fill="#0a1ea0"/><rect x="6" y="6" width="3" height="7" fill="#1c44c8"/></svg>
<svg class="a" style="left:350px;top:202px" width="16" height="16" viewBox="0 0 16 16"><circle cx="8" cy="8" r="7.2" fill="url(#gi)" stroke="#7c7c7c" stroke-width="1.3"/><rect x="6" y="3" width="3" height="2" fill="#0a1ea0"/><rect x="6" y="6" width="3" height="7" fill="#1c44c8"/></svg>
<svg class="a" style="left:350px;top:219px" width="16" height="16" viewBox="0 0 16 16"><circle cx="8" cy="8" r="7.2" fill="url(#gi)" stroke="#7c7c7c" stroke-width="1.3"/><rect x="6" y="3" width="3" height="2" fill="#0a1ea0"/><rect x="6" y="6" width="3" height="7" fill="#1c44c8"/></svg>
<svg class="a" style="left:350px;top:236px" width="16" height="16" viewBox="0 0 16 16"><circle cx="8" cy="8" r="7.2" fill="url(#gi)" stroke="#7c7c7c" stroke-width="1.3"/><rect x="6" y="3" width="3" height="2" fill="#0a1ea0"/><rect x="6" y="6" width="3" height="7" fill="#1c44c8"/></svg>
<svg class="a" style="left:350px;top:253px" width="16" height="16" viewBox="0 0 16 16"><circle cx="8" cy="8" r="7.2" fill="url(#gi)" stroke="#7c7c7c" stroke-width="1.3"/><rect x="6" y="3" width="3" height="2" fill="#0a1ea0"/><rect x="6" y="6" width="3" height="7" fill="#1c44c8"/></svg>
<svg class="a" style="left:350px;top:270px" width="16" height="16" viewBox="0 0 16 16"><circle cx="8" cy="8" r="7.2" fill="url(#gi)" stroke="#7c7c7c" stroke-width="1.3"/><rect x="6" y="3" width="3" height="2" fill="#0a1ea0"/><rect x="6" y="6" width="3" height="7" fill="#1c44c8"/></svg>
<svg class="a" style="left:350px;top:287px" width="16" height="16" viewBox="0 0 16 16"><circle cx="8" cy="8" r="7.2" fill="url(#gis)" stroke="#3a4a80" stroke-width="1.3"/><rect x="6" y="3" width="3" height="2" fill="#0a1ea0"/><rect x="6" y="6" width="3" height="7" fill="#0c2a9a"/></svg>
<svg class="a" style="left:350px;top:304px" width="16" height="16" viewBox="0 0 16 16"><circle cx="8" cy="8" r="7.2" fill="url(#gi)" stroke="#7c7c7c" stroke-width="1.3"/><rect x="6" y="3" width="3" height="2" fill="#0a1ea0"/><rect x="6" y="6" width="3" height="7" fill="#1c44c8"/></svg>
<div class="a" style="left:1017px;top:116px;width:16px;height:188px;background-image:repeating-conic-gradient(#fff 0 25%,#d4d0c8 0 50%);background-size:2px 2px"></div>
<div class="a" style="left:1017px;top:100px;width:16px;height:16px;background:#d4d0c8;box-shadow:inset -1px -1px #404040,inset 1px 1px #d4d0c8,inset -2px -2px #808080,inset 2px 2px #fff"></div>
<svg class="a" style="left:1021px;top:106px" width="7" height="4" viewBox="0 0 7 4" shape-rendering="crispEdges"><rect x="3" y="0" width="1" height="1"/><rect x="2" y="1" width="3" height="1"/><rect x="1" y="2" width="5" height="1"/><rect x="0" y="3" width="7" height="1"/></svg>
<div class="a" style="left:1017px;top:304px;width:16px;height:16px;background:#d4d0c8;box-shadow:inset -1px -1px #404040,inset 1px 1px #d4d0c8,inset -2px -2px #808080,inset 2px 2px #fff"></div>
<svg class="a" style="left:1021px;top:310px" width="7" height="4" viewBox="0 0 7 4" shape-rendering="crispEdges"><rect x="3" y="3" width="1" height="1"/><rect x="2" y="2" width="3" height="1"/><rect x="1" y="1" width="5" height="1"/><rect x="0" y="0" width="7" height="1"/></svg>
<div class="a" style="left:1017px;top:121px;width:16px;height:8px;background:#d4d0c8;box-shadow:inset -1px -1px #404040,inset 1px 1px #d4d0c8,inset -2px -2px #808080,inset 2px 2px #fff"></div>
<div class="a" style="left:343px;top:325px;width:693px;height:1px;background:#808080"></div>
<div class="a" style="left:343px;top:325px;width:1px;height:528px;background:#808080"></div>
<div class="a" style="left:344px;top:326px;width:691px;height:1px;background:#404040"></div>
<div class="a" style="left:344px;top:326px;width:1px;height:526px;background:#404040"></div>
<div class="a" style="left:1034px;top:326px;width:1px;height:526px;background:#d4d0c8"></div>
<div class="a" style="left:344px;top:851px;width:691px;height:1px;background:#d4d0c8"></div>
<div class="a" style="left:1035px;top:325px;width:1px;height:528px;background:#fff"></div>
<div class="a" style="left:343px;top:852px;width:693px;height:1px;background:#fff"></div>
<div class="t" style="left:351px;top:332px;font-size:12px;letter-spacing:-0.2px">Event 7045, Service Control Manager</div>
<svg class="a" style="left:1014px;top:333px" width="9" height="9" viewBox="0 0 9 9"><path d="M0.3 0 H2.2 L4.25 2.6 L6.3 0 H8.2 V1.2 L5.6 4.5 L8.2 7.8 V9 H6.3 L4.25 6.4 L2.2 9 H0.3 V7.8 L2.9 4.5 L0.3 1.2 Z" fill="#000"/></svg>
<div class="a" style="left:348px;top:348px;width:683px;height:2px;background:#808080;"></div>
<div class="a" style="left:353px;top:378px;width:673px;height:465px;box-shadow:inset -1px -1px #404040,inset 1px 1px #fff,inset -2px -2px #808080"></div>
<div class="a" style="left:409px;top:358px;width:44px;height:1px;background:#fff"></div>
<div class="a" style="left:453px;top:359px;width:1px;height:1px;background:#404040;"></div>
<div class="a" style="left:453px;top:360px;width:1px;height:18px;background:#808080"></div>
<div class="a" style="left:454px;top:360px;width:1px;height:18px;background:#404040"></div>
<div class="a" style="left:354px;top:357px;width:53px;height:22px;background:#d4d0c8;"></div>
<div class="a" style="left:355px;top:356px;width:52px;height:1px;background:#fff"></div>
<div class="a" style="left:354px;top:357px;width:1px;height:1px;background:#fff;"></div>
<div class="a" style="left:353px;top:358px;width:1px;height:21px;background:#fff"></div>
<div class="a" style="left:407px;top:357px;width:1px;height:1px;background:#404040;"></div>
<div class="a" style="left:407px;top:358px;width:1px;height:21px;background:#808080"></div>
<div class="a" style="left:408px;top:358px;width:1px;height:21px;background:#404040"></div>
<div class="t" style="left:361px;top:361px;">General</div>
<div class="t" style="left:413px;top:363px;">Details</div>
<div class="a" style="left:368px;top:395px;width:624px;height:261px;border-top:1px solid #808080;border-left:1px solid #808080;border-right:1px solid #fff;border-bottom:1px solid #fff"><div class="a" style="left:0;top:0;width:622px;height:259px;border-top:1px solid #404040;border-left:1px solid #404040;border-right:1px solid #d4d0c8;border-bottom:1px solid #d4d0c8"></div></div>
<div class="t" style="left:371px;top:400px;font-size:12px;letter-spacing:-0.12px">A service was installed in the system.</div>
<div class="t" style="left:371px;top:430px;font-size:12px;letter-spacing:-0.2px">Service Name:</div>
<div class="t" style="left:452.0px;top:430px;font-size:12px;letter-spacing:-0.12px">Google Update Service (gupdatem)</div>
<div class="t" style="left:371px;top:445px;font-size:12px;letter-spacing:-0.24px">Service File Name:</div>
<div class="t" style="left:473.6px;top:445px;font-size:12px;letter-spacing:-0.06px">"C:\Program Files (x86)\Google\Update\GoogleUpdate.exe" /medsvc</div>
<div class="t" style="left:371px;top:460px;font-size:12px;letter-spacing:-0.21px">Service Type:</div>
<div class="t" style="left:446.4px;top:460px;font-size:12px;letter-spacing:-0.12px">user mode service</div>
<div class="t" style="left:371px;top:475px;font-size:12px;letter-spacing:-0.23px">Service Start Type:</div>
<div class="t" style="left:473.0px;top:475px;font-size:12px;letter-spacing:0.05px">demand start</div>
<div class="t" style="left:371px;top:490px;font-size:12px;letter-spacing:-0.12px">Service Account:</div>
<div class="t" style="left:465.0px;top:490px;font-size:12px;letter-spacing:-0.12px">LocalSystem</div>
<div class="t" style="left:365.6px;top:673px;font-size:12px;letter-spacing:0.1px">Log Name:</div>
<div class="t" style="left:472.5px;top:673px;font-size:12px;letter-spacing:0.1px">System</div>
<div class="t" style="left:365.6px;top:694px;font-size:12px;letter-spacing:0px">Source:</div>
<div class="t" style="left:472.5px;top:694px;font-size:12px;letter-spacing:-0.06px">Service Control Manager</div>
<div class="t" style="left:630.8px;top:694px;font-size:12px;letter-spacing:0.3px">Logged:</div>
<div class="t" style="left:718.5px;top:694px;font-size:12px;letter-spacing:-0.22px">1/16/2020 1:49:14 PM</div>
<div class="t" style="left:365.6px;top:715px;font-size:12px;letter-spacing:-0.14px">Event ID:</div>
<div class="t" style="left:472.5px;top:715px;font-size:12px;letter-spacing:-0.25px">7045</div>
<div class="t" style="left:630.8px;top:715px;font-size:12px;letter-spacing:-0.08px">Task Category:</div>
<div class="t" style="left:718.5px;top:715px;font-size:12px;letter-spacing:0.7px">None</div>
<div class="t" style="left:365.6px;top:736px;font-size:12px;letter-spacing:0px">Level:</div>
<div class="t" style="left:472.5px;top:736px;font-size:12px;letter-spacing:0.5px">Information</div>
<div class="t" style="left:630.8px;top:736px;font-size:12px;letter-spacing:0px">Keywords:</div>
<div class="t" style="left:718.5px;top:736px;font-size:12px;letter-spacing:-0.1px">Classic</div>
<div class="t" style="left:365.6px;top:757px;font-size:12px;letter-spacing:-0.2px">User:</div>
<div class="t" style="left:472.5px;top:757px;font-size:12px;letter-spacing:0px">WIN-NDKLH123U36\Admini</div>
<div class="t" style="left:630.8px;top:757px;font-size:12px;letter-spacing:0.35px">Computer:</div>
<div class="t" style="left:718.5px;top:757px;font-size:12px;letter-spacing:-0.3px">WIN-NDKLH123U36</div>
<div class="t" style="left:365.6px;top:778px;font-size:12px;letter-spacing:0.12px">OpCode:</div>
<div class="t" style="left:472.5px;top:778px;font-size:12px;letter-spacing:0.5px">Info</div>
<div class="t" style="left:365.6px;top:799px;font-size:12px;letter-spacing:0.3px">More Information:</div>
<div class="t" style="left:475.8px;top:799px;font-size:12px;letter-spacing:-0.05px;color:#0000ff;text-decoration:underline">Event Log Online Help</div>
</body></html>
